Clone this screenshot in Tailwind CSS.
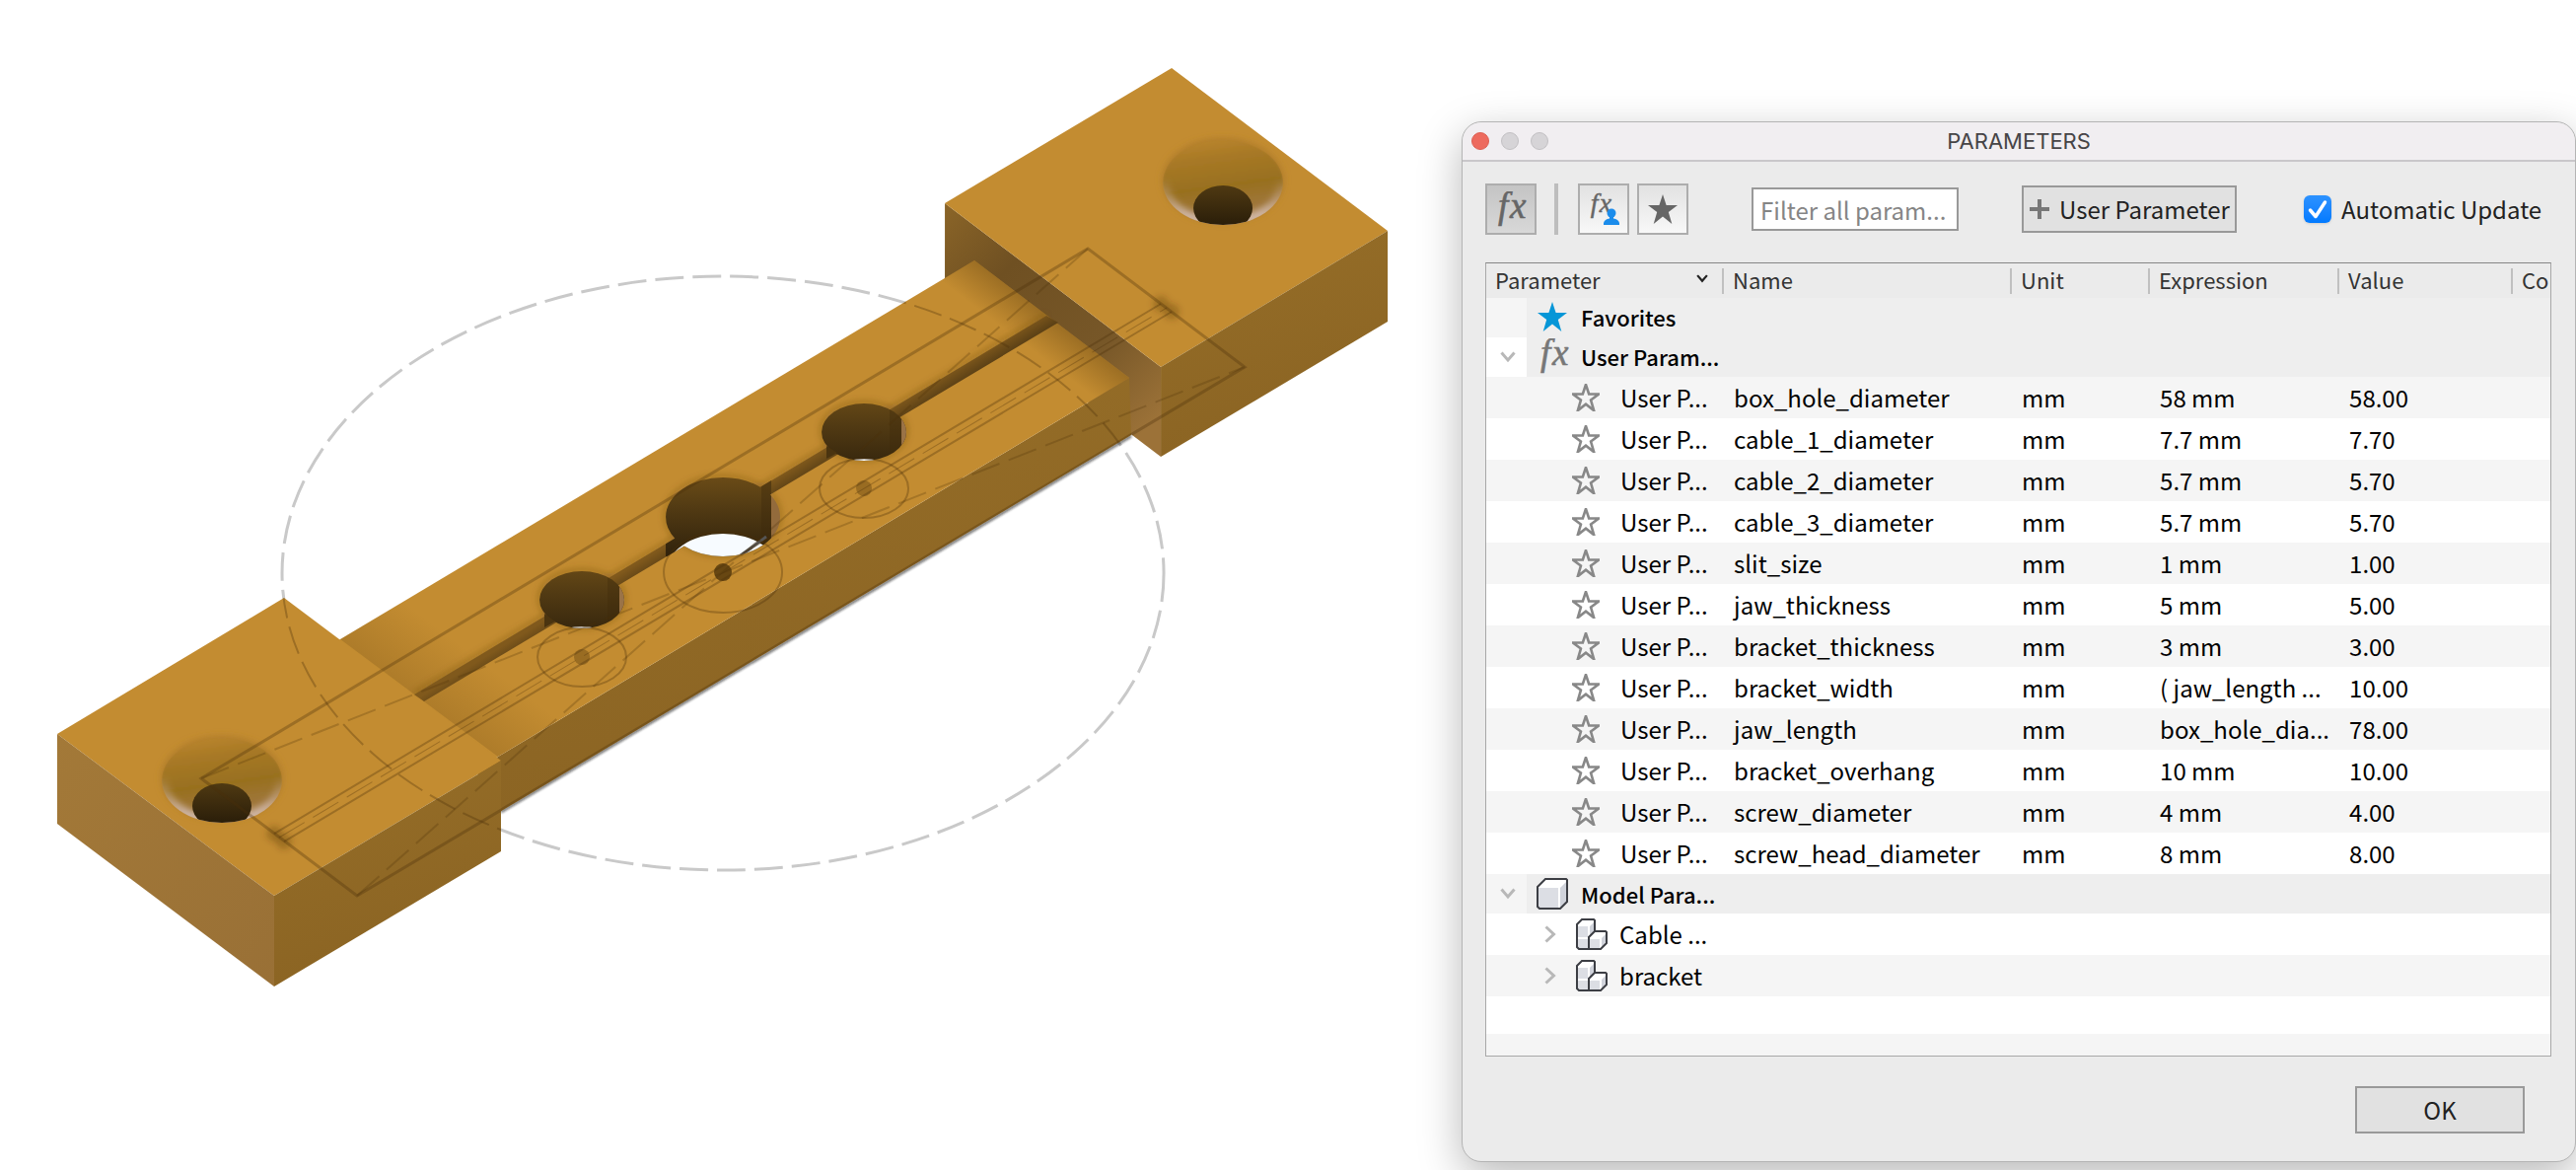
<!DOCTYPE html>
<html lang="en">
<head>
  <meta charset="utf-8">
  <meta name="viewport" content="width=device-width, initial-scale=1">
  <title>Parameters</title>
  <script src="https://cdn.jsdelivr.net/npm/@tailwindcss/browser@4"></script>
</head>
<body class="min-h-screen bg-white font-['Noto_Sans_CJK_SC','Open_Sans',sans-serif] text-2xl text-black">

  <!-- shared icons -->
  <svg class="hidden" aria-hidden="true">
    <symbol id="star" viewBox="0 0 32 32"><path d="M16 1l3.600 11H31l-9.200 6.900L25.300 31 16 23.600 6.700 31l3.500-12.100L1 12h11.400z"/></symbol>
    <symbol id="fx" viewBox="0 0 36 36">
      <text x="5" y="27" font-family="Liberation Serif, serif" font-style="italic" font-size="37" fill="currentColor" stroke="currentColor" stroke-width=".6">f</text>
      <text x="17" y="27" font-family="Liberation Serif, serif" font-style="italic" font-size="37" fill="currentColor" stroke="currentColor" stroke-width=".6">x</text>
    </symbol>
    <symbol id="down" viewBox="0 0 16 12"><path d="M1.500 1.500L8 9l6.500-7.500" fill="none" stroke="currentColor" stroke-width="3"/></symbol>
    <symbol id="right" viewBox="0 0 12 18"><path d="M1.500 1.500L9.500 9l-8 7.500" fill="none" stroke="currentColor" stroke-width="3"/></symbol>
    <symbol id="body" viewBox="0 0 32 32">
      <path d="M1 9l8-8h22v23l-7 7H3l-2-2z" fill="#fff"/>
      <path d="M2 10h20v20H3l-1-1z" fill="#dcdee4"/>
      <path d="M24 10l6-6v20l-6 6z" fill="#d0d3db"/>
      <path d="M1 9l8-8h21l1 1v22l-7 7H3l-2-2z" fill="none" stroke="#3c3e44" stroke-width="2"/>
    </symbol>
    <symbol id="component" viewBox="0 0 32 32">
      <path d="M1 6l5-5h12l1 1v11h12v11l-6 7H3l-2-2z" fill="#fff"/>
      <path d="M2 8h10v11H2zM2 21h10v9H3l-1-1zM14 21h10v9H14z" fill="#dcdee4"/>
      <path d="M14 8l4-4v10l-4 5zM26 20l4-4v8l-4 5z" fill="#d0d3db"/>
      <path d="M1 6l5-5h12l1 1v11h11l1 1v11l-6 6H3l-2-2zM13 31V19l6-6" fill="none" stroke="#3c3e44" stroke-width="2"/>
    </symbol>
  </svg>

  <main class="flex min-h-screen items-start overflow-hidden">

    <!-- 3D canvas -->
    <section class="min-w-0 flex-1" aria-label="Model view">
      <svg class="block w-full" viewBox="0 0 1482 1186">
        <defs>
          <linearGradient id="front" x1="0" y1="0" x2="0.300" y2="1"><stop offset="0" stop-color="#966e28"/><stop offset="1" stop-color="#8b6423"/></linearGradient>
          <linearGradient id="side" x1="0" y1="0" x2="1" y2="1"><stop offset="0" stop-color="#a37938"/><stop offset="1" stop-color="#997036"/></linearGradient>
          <linearGradient id="inner" gradientUnits="userSpaceOnUse" x1="958" y1="206" x2="1177" y2="420"><stop offset="0" stop-color="#8b6528"/><stop offset=".3" stop-color="#6f5022"/><stop offset=".7" stop-color="#775728"/><stop offset="1" stop-color="#9c7238"/></linearGradient>
          <linearGradient id="shadeR" gradientUnits="userSpaceOnUse" x1="1066" y1="324" x2="1044" y2="353"><stop offset="0" stop-color="#6f4c14" stop-opacity=".45"/><stop offset="1" stop-color="#6f4c14" stop-opacity="0"/></linearGradient>
          <linearGradient id="shadeL" gradientUnits="userSpaceOnUse" x1="425" y1="707" x2="466" y2="653"><stop offset="0" stop-color="#6f4c14" stop-opacity=".25"/><stop offset="1" stop-color="#6f4c14" stop-opacity="0"/></linearGradient>
          <linearGradient id="bore" x1="0" y1="0" x2="0" y2="1"><stop offset="0" stop-color="#6a4b17"/><stop offset=".4" stop-color="#513a13"/><stop offset="1" stop-color="#30220c"/></linearGradient>
          <linearGradient id="slit" gradientUnits="userSpaceOnUse" x1="740" y1="513" x2="748" y2="526"><stop offset="0" stop-color="#80591c"/><stop offset="1" stop-color="#5c4116"/></linearGradient>
          <linearGradient id="screw" x1="0" y1="0" x2="0" y2="1"><stop offset="0" stop-color="#4f3912"/><stop offset="1" stop-color="#251a08"/></linearGradient>
          <linearGradient id="sink" x1=".4" y1="0" x2=".6" y2="1"><stop offset="0" stop-color="#b8842c"/><stop offset=".2" stop-color="#a87926"/><stop offset=".55" stop-color="#98701f"/><stop offset=".8" stop-color="#9f763a"/><stop offset="1" stop-color="#b8936a"/></linearGradient>
          <linearGradient id="rim" x1="0" y1="0" x2="0" y2="1"><stop offset=".45" stop-color="#c5a58a" stop-opacity="0"/><stop offset=".9" stop-color="#d0b8a8"/></linearGradient>
          <filter id="soft" x="-20%" y="-20%" width="140%" height="140%"><feGaussianBlur stdDeviation="3"/></filter>
          <filter id="soft1" x="-20%" y="-20%" width="140%" height="140%"><feGaussianBlur stdDeviation="1"/></filter>
          <clipPath id="bigHole"><ellipse cx="733" cy="524" rx="58" ry="40"/><path d="M420 704L1061 320 1073 327 430 711z"/></clipPath>
          <clipPath id="holeR"><ellipse cx="876" cy="438" rx="43" ry="29"/></clipPath>
          <clipPath id="holeL"><ellipse cx="590" cy="608" rx="43" ry="29"/></clipPath>
          <clipPath id="sinkR"><ellipse cx="1240" cy="185" rx="61" ry="43"/></clipPath>
          <clipPath id="sinkL"><ellipse cx="225" cy="791" rx="61" ry="43"/></clipPath>
          <clipPath id="solid"><path d="M58 744L288 606l57 42 613-366v-76l230-137 219 165v92l-230 137-30-22-639 381v41l-230 137L58 835z"/></clipPath>
        </defs>

        <!-- construction circle -->
        <ellipse cx="733" cy="581" rx="447" ry="301" fill="none" stroke="#c9c9c9" stroke-width="3" stroke-dasharray="29 9"/>

        <!-- right bracket -->
        <path d="M958 206l219 166v91L958 297z" fill="url(#inner)"/>
        <path d="M958 206l230-137 219 165-230 138z" fill="#c38c31"/>
        <path d="M1177 372l230-138v92l-230 137z" fill="url(#front)"/>

        <!-- jaw -->
        <path d="M508 823l639-381" stroke="#222" stroke-opacity=".6" stroke-width="3" filter="url(#soft1)"/>
        <path d="M485 779l660-396 2 58-662 395z" fill="url(#front)"/>
        <path d="M325 660L988 264l157 119-660 396z" fill="#c38c31"/>
        <path d="M988 264l157 119-70 42-157-119z" fill="url(#shadeR)"/>
        <path d="M345 648l160 119 150-90-160-119z" fill="url(#shadeL)"/>

        <!-- slit and cable holes -->
        <g fill="none" stroke="#6f4c14" stroke-opacity=".45" stroke-width="4" filter="url(#soft)">
          <ellipse cx="733" cy="523" rx="58" ry="40"/>
          <ellipse cx="876" cy="437" rx="43" ry="29"/>
          <ellipse cx="590" cy="607" rx="43" ry="29"/>
          <path d="M420 703L1061 319"/>
        </g>
        <path d="M420 704L1061 320 1073 327 430 711z" fill="url(#slit)"/>
        <g clip-path="url(#holeR)">
          <path d="M833 400h86v80h-86z" fill="url(#bore)"/>
          <path d="M902 400h12v80h-12z" fill="#3f2a0c" fill-opacity=".35"/>
          <path d="M914 422h6v40h-6z" fill="#9a7347"/>
          <ellipse cx="876" cy="495" rx="43" ry="30" fill="#f4f8fd"/>
        </g>
        <g clip-path="url(#holeL)">
          <path d="M547 570h86v80h-86z" fill="url(#bore)"/>
          <path d="M616 570h12v80h-12z" fill="#3f2a0c" fill-opacity=".35"/>
          <path d="M628 592h6v40h-6z" fill="#9a7347"/>
          <ellipse cx="590" cy="665" rx="43" ry="30" fill="#f4f8fd"/>
        </g>
        <g clip-path="url(#bigHole)">
          <path d="M675 484h107v80H675z" fill="url(#bore)"/>
          <path d="M772 484h10v80h-10z" fill="#3f2a0c" fill-opacity=".4"/>
          <path d="M782 500h10v48h-10z" fill="#936b3c"/>
          <ellipse cx="733" cy="581" rx="58" ry="40" fill="#f7fbff"/>
          <path d="M751 563l26-19" stroke="#555" stroke-width="3"/>
        </g>
        <path d="M838 452v13l11-6zM552 622v14l11-6z" fill="#4a3410"/>

        <!-- left bracket -->
        <path d="M58 744l230-138 220 165-230 137z" fill="#c38c31"/>
        <path d="M58 744l220 164v92L58 835z" fill="url(#side)"/>
        <path d="M278 908l230-137v92l-230 137z" fill="url(#front)"/>

        <!-- countersinks -->
        <ellipse cx="1240" cy="183" rx="62" ry="43" fill="#b07d2a" filter="url(#soft)"/>
        <g clip-path="url(#sinkR)">
          <ellipse cx="1240" cy="185" rx="61" ry="43" fill="url(#sink)" filter="url(#soft1)"/>
          <ellipse cx="1240" cy="185" rx="60" ry="42" fill="none" stroke="url(#rim)" stroke-width="10" filter="url(#soft)"/>
          <ellipse cx="1240" cy="211" rx="30" ry="23" fill="url(#screw)"/>
        </g>
        <ellipse cx="225" cy="789" rx="62" ry="43" fill="#b07d2a" filter="url(#soft)"/>
        <g clip-path="url(#sinkL)">
          <ellipse cx="225" cy="791" rx="61" ry="43" fill="url(#sink)" filter="url(#soft1)"/>
          <ellipse cx="225" cy="791" rx="60" ry="42" fill="none" stroke="url(#rim)" stroke-width="10" filter="url(#soft)"/>
          <ellipse cx="225" cy="817" rx="30" ry="23" fill="url(#screw)"/>
        </g>

        <!-- sketch seen through the body -->
        <g clip-path="url(#solid)" fill="none" stroke="#4a3008" stroke-opacity=".32" stroke-width="2">
          <path d="M204 789L1103 252l159 120-900 536z" stroke-width="3"/>
          <path d="M278 845L1177 308M288 853L1188 316"/>
          <path d="M283 849L1183 312" stroke-dasharray="30 10" stroke-width="1"/>
          <path d="M204 789L1262 372M362 908L1103 252" stroke-dasharray="30 10" stroke-opacity=".25"/>
          <ellipse cx="733" cy="580" rx="60" ry="41"/>
          <ellipse cx="876" cy="495" rx="45" ry="30"/>
          <ellipse cx="590" cy="666" rx="45" ry="30"/>
          <ellipse cx="733" cy="581" rx="447" ry="301" stroke-dasharray="29 9"/>
        </g>
        <g fill="#4a3008">
          <circle cx="733" cy="580" r="9" fill-opacity=".75"/>
          <circle cx="876" cy="495" r="8" fill-opacity=".35"/>
          <circle cx="590" cy="666" r="8" fill-opacity=".35"/>
          <g fill-opacity=".3" filter="url(#soft)">
            <circle cx="278" cy="845" r="8"/><circle cx="288" cy="853" r="8"/>
            <circle cx="1177" cy="308" r="8"/><circle cx="1188" cy="316" r="8"/>
          </g>
        </g>
      </svg>
    </section>

    <!-- dialog -->
    <section class="mt-[123px] w-[43.26%] shrink-0 rounded-[20px] border border-[#b4b4b4] bg-[#ebebeb] shadow-[0_14px_44px_rgba(0,0,0,0.28)]" aria-labelledby="title">
      <header class="flex h-10 items-center rounded-t-[20px] border-b-2 border-[#c9c7ca] bg-[#f1eef1] px-[9px]">
        <div class="flex flex-1 gap-3">
          <button class="size-[18px] rounded-full border border-[#dd5f52] bg-[#ed6a5e]" aria-label="Close"></button>
          <button class="size-[18px] rounded-full border border-[#c2c0c3] bg-[#d6d4d7]" aria-label="Minimize"></button>
          <button class="size-[18px] rounded-full border border-[#c2c0c3] bg-[#d6d4d7]" aria-label="Zoom"></button>
        </div>
        <h1 id="title" class="font-['Inter',sans-serif] text-[22px] leading-7 text-[#464446]">PARAMETERS</h1>
        <div class="flex-1"></div>
      </header>

      <div class="flex items-center pt-[22px] pr-6 pl-[23px] leading-8 text-[#222]">
        <button class="flex size-[52px] items-center justify-center border-2 border-[#adadad] bg-linear-to-b from-[#c4c4c4] to-[#d8d8d8] text-[#666]" aria-label="All parameters">
          <svg class="size-9"><use href="#fx"/></svg>
        </button>
        <span class="ml-[18px] h-[52px] w-1 bg-[#bdbdbd]"></span>
        <button class="ml-5 flex size-[52px] items-center justify-center border-2 border-[#adadad] bg-linear-to-b from-[#e2e2e2] to-[#f8f8f8] text-[#666]" aria-label="User parameters">
          <svg class="size-9" viewBox="0 0 36 36">
            <use href="#fx" x="1" y="1" width="27" height="27"/>
            <circle cx="26" cy="22" r="4.500" fill="#1b8ceb"/>
            <path d="M18 34v-2q1-4 6-4.500V25h4v2.500q5 .5 6 4.500v2z" fill="#1b8ceb"/>
          </svg>
        </button>
        <button class="ml-2 flex size-[52px] items-center justify-center border-2 border-[#adadad] bg-linear-to-b from-[#e2e2e2] to-[#f8f8f8]" aria-label="Favorites">
          <svg class="size-8 fill-[#666]"><use href="#star"/></svg>
        </button>
        <input type="text" class="ml-16 h-11 w-[210px] border-2 border-[#999] bg-white px-[7px] placeholder:text-[#858585]" placeholder="Filter all param..." aria-label="Filter all parameters">
        <button class="ml-16 flex h-12 w-[218px] items-center gap-[10px] border-2 border-[#999] bg-[#e1e1e1] pl-1.5 whitespace-nowrap">
          <svg class="size-5 shrink-0" viewBox="0 0 20 20"><path d="M0 10h20M10 0v20" stroke="#777" stroke-width="4"/></svg>
          User Parameter
        </button>
        <label class="ml-[68px] flex items-center gap-[10px] whitespace-nowrap">
          <span class="relative size-7">
            <input type="checkbox" checked class="block size-7 appearance-none rounded-md bg-linear-to-b from-[#2c92ff] to-[#007aff] shadow-sm">
            <svg class="pointer-events-none absolute inset-0 size-7" viewBox="0 0 28 28"><path d="M6.500 15l5.500 6.500L21.500 7" fill="none" stroke="#fff" stroke-width="3.500" stroke-linecap="round" stroke-linejoin="round"/></svg>
          </span>
          Automatic Update
        </label>
      </div>

      <div class="mt-7 mr-6 ml-[23px] overflow-hidden border border-[#a8a8a8] border-t-[#858585] bg-[#f5f5f5] pb-[22px]">
        <table class="w-full table-fixed border-collapse text-left leading-8 whitespace-nowrap">
          <colgroup>
            <col class="w-[41px]"><col class="w-[200px]"><col class="w-[292px]"><col class="w-[140px]"><col class="w-[192px]"><col class="w-[176px]"><col>
          </colgroup>
          <thead class="bg-[#ebebeb] text-[22px] text-[#333]">
            <tr class="h-[35px]">
              <th colspan="2" class="p-0 font-normal"><span class="flex h-[26px] items-center justify-between border-r-2 border-[#c0c0c0] pr-3.5 pb-1 pl-[9px]">Parameter <svg class="h-[9px] w-3 text-[#222]"><use href="#down"/></svg></span></th>
              <th class="p-0 font-normal"><span class="flex h-[26px] items-center border-r-2 border-[#c0c0c0] pb-1 pl-[9px]">Name</span></th>
              <th class="p-0 font-normal"><span class="flex h-[26px] items-center border-r-2 border-[#c0c0c0] pb-1 pl-[9px]">Unit</span></th>
              <th class="p-0 font-normal"><span class="flex h-[26px] items-center border-r-2 border-[#c0c0c0] pb-1 pl-[9px]">Expression</span></th>
              <th class="p-0 font-normal"><span class="flex h-[26px] items-center border-r-2 border-[#c0c0c0] pb-1 pl-[9px]">Value</span></th>
              <th class="overflow-hidden p-0 font-normal"><span class="flex h-[26px] items-center pb-1 pl-[9px]">Comments</span></th>
            </tr>
          </thead>
          <tbody class="text-[22px] leading-7 font-medium">
            <tr class="h-10 bg-[#eee]">
              <td class="bg-[#f5f5f5] p-0"></td>
              <td colspan="6" class="p-0 pb-0.5"><span class="flex items-center gap-[13px] pl-[10px]"><svg class="size-8 fill-[#0696d7]"><use href="#star"/></svg>Favorites</span></td>
            </tr>
            <tr class="h-10 bg-[#eee]">
              <td class="bg-white p-0"><svg class="ml-3.5 h-3 w-4 text-[#b8b8b8]"><use href="#down"/></svg></td>
              <td colspan="6" class="p-0 pb-0.5"><span class="flex items-center gap-[10px] pl-[9px]"><svg class="size-9 text-[#777]"><use href="#fx"/></svg>User Param...</span></td>
            </tr>
          </tbody>
          <tbody id="user-params"></tbody>
          <tbody>
            <tr class="h-10 bg-[#eee] text-[22px] font-medium">
              <td class="bg-[#f5f5f5] p-0"><svg class="ml-3.5 h-3 w-4 text-[#b8b8b8]"><use href="#down"/></svg></td>
              <td colspan="6" class="p-0"><span class="flex items-center gap-[13px] pl-[10px]"><svg class="size-8"><use href="#body"/></svg>Model Para...</span></td>
            </tr>
            <tr class="h-[42px] bg-white">
              <td class="p-0"></td>
              <td colspan="6" class="p-0"><span class="flex items-center pl-[18px]"><svg class="h-[18px] w-3 text-[#b8b8b8]"><use href="#right"/></svg><svg class="mr-3 ml-5 size-8"><use href="#component"/></svg>Cable ...</span></td>
            </tr>
            <tr class="h-[42px] bg-[#f5f5f5]">
              <td class="p-0"></td>
              <td colspan="6" class="p-0"><span class="flex items-center pl-[18px]"><svg class="h-[18px] w-3 text-[#b8b8b8]"><use href="#right"/></svg><svg class="mr-3 ml-5 size-8"><use href="#component"/></svg>bracket</span></td>
            </tr>
            <tr class="h-[38px] bg-white"><td colspan="7" class="p-0"></td></tr>
          </tbody>
        </table>
      </div>

      <footer class="flex justify-end pt-[30px] pr-[51px] pb-7">
        <button class="h-12 w-[172px] border-2 border-[#999] bg-[#e1e1e1] leading-8 text-[#222]">OK</button>
      </footer>
    </section>
  </main>

  <script>
    const params = [
      ['box_hole_diameter', 'mm', '58 mm', '58.00'],
      ['cable_1_diameter', 'mm', '7.7 mm', '7.70'],
      ['cable_2_diameter', 'mm', '5.7 mm', '5.70'],
      ['cable_3_diameter', 'mm', '5.7 mm', '5.70'],
      ['slit_size', 'mm', '1 mm', '1.00'],
      ['jaw_thickness', 'mm', '5 mm', '5.00'],
      ['bracket_thickness', 'mm', '3 mm', '3.00'],
      ['bracket_width', 'mm', '( jaw_length ...', '10.00'],
      ['jaw_length', 'mm', 'box_hole_dia...', '78.00'],
      ['bracket_overhang', 'mm', '10 mm', '10.00'],
      ['screw_diameter', 'mm', '4 mm', '4.00'],
      ['screw_head_diameter', 'mm', '8 mm', '8.00'],
    ];

    document.getElementById('user-params').innerHTML = params.map(([name, unit, expr, value]) => `
      <tr class="h-[42px] odd:bg-[#f5f5f5] even:bg-white">
        <td class="p-0"></td>
        <td class="p-0"><span class="flex items-center gap-[21px] pl-[46px]"><svg class="size-7 fill-none stroke-[#888] stroke-3"><use href="#star"/></svg>User P...</span></td>
        <td class="p-0 pl-[10px]">${name}</td>
        <td class="p-0 pl-[10px]">${unit}</td>
        <td class="p-0 pl-[10px]">${expr}</td>
        <td class="p-0 pl-[10px]">${value}</td>
        <td class="p-0"></td>
      </tr>`).join('');
  </script>
</body>
</html>
